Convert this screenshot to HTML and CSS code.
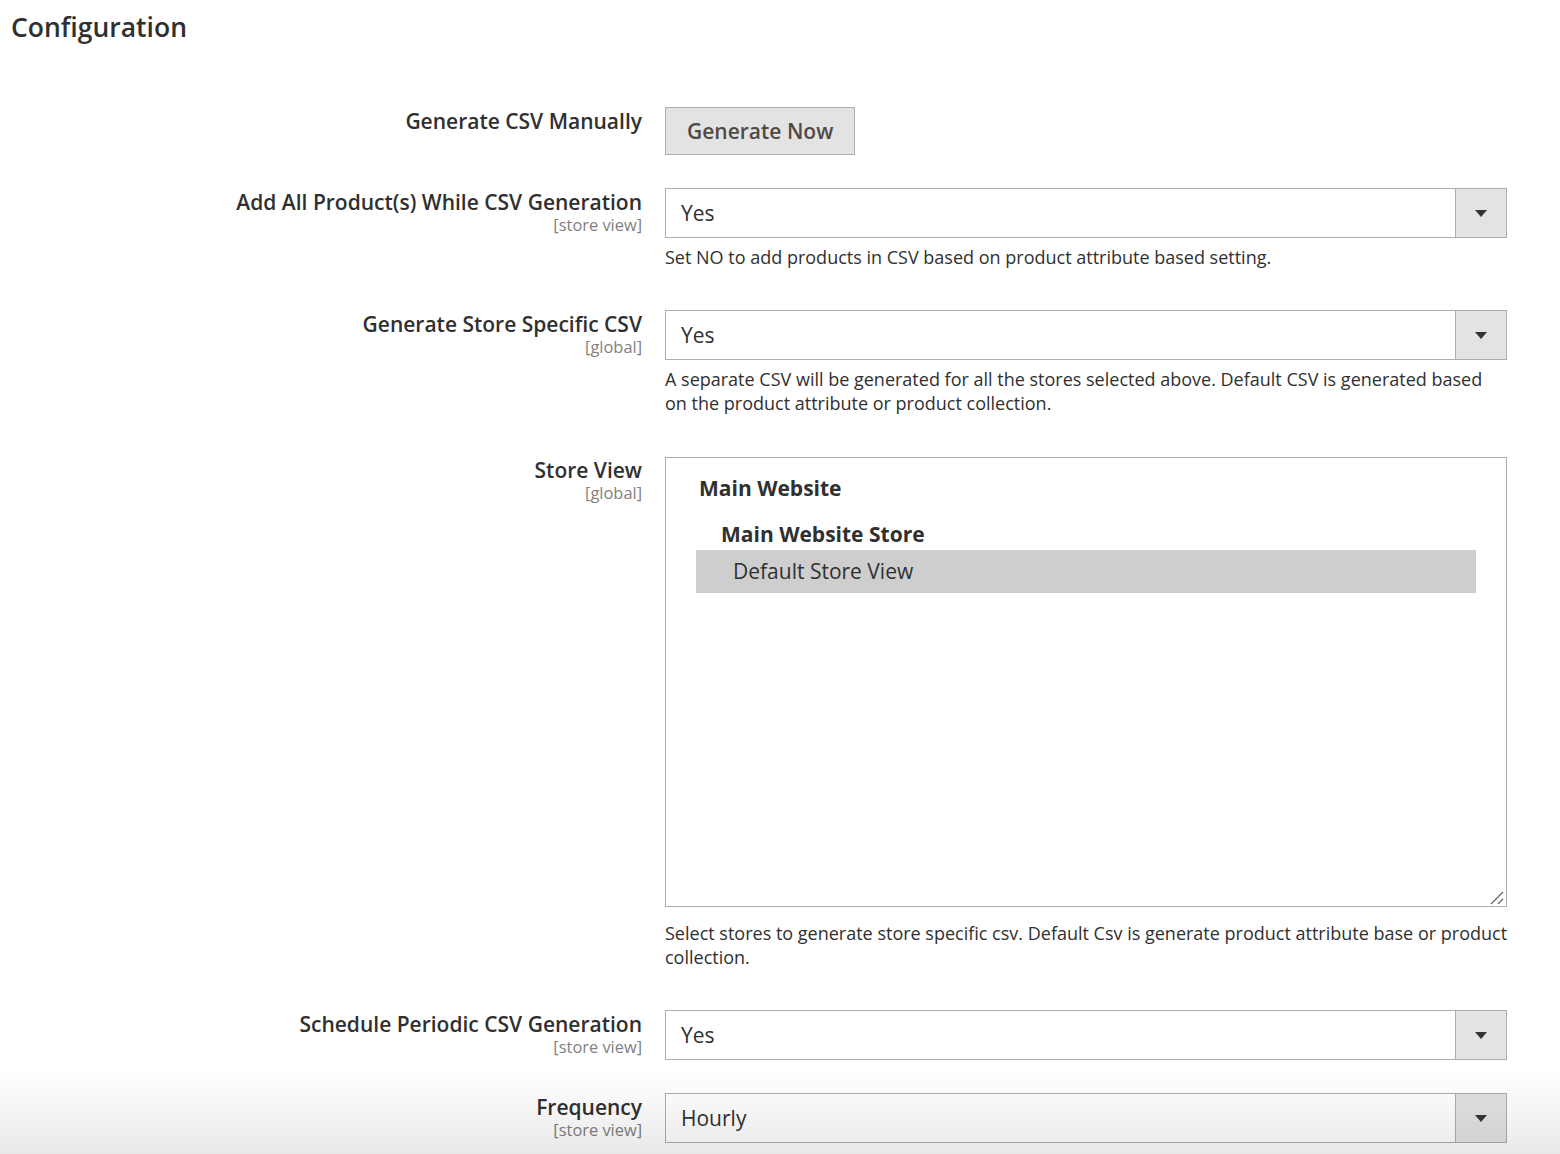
FILE: index.html
```html
<!DOCTYPE html>
<html lang="en">
<head>
  <meta charset="UTF-8">
  <meta name="viewport" content="width=device-width, initial-scale=1.0">
  <title>Configuration</title>
  <link rel="stylesheet" href="styles.css">
</head>
<body>
  <h1 class="page-title">Configuration</h1>

  <div class="config">
    <div class="row">
      <div class="label">
        <span class="name">Generate CSV Manually</span>
      </div>
      <div class="value">
        <button class="btn" type="button">Generate Now</button>
      </div>
    </div>

    <div class="row">
      <div class="label">
        <span class="name">Add All Product(s) While CSV Generation</span>
        <span class="scope">[store view]</span>
      </div>
      <div class="value">
        <div class="select"><span class="select-text">Yes</span><span class="select-arrow"></span></div>
        <p class="note">Set NO to add products in CSV based on product attribute based setting.</p>
      </div>
    </div>

    <div class="row">
      <div class="label">
        <span class="name">Generate Store Specific CSV</span>
        <span class="scope">[global]</span>
      </div>
      <div class="value">
        <div class="select"><span class="select-text">Yes</span><span class="select-arrow"></span></div>
        <p class="note">A separate CSV will be generated for all the stores selected above. Default CSV is generated based on the product attribute or product collection.</p>
      </div>
    </div>

    <div class="row">
      <div class="label">
        <span class="name">Store View</span>
        <span class="scope">[global]</span>
      </div>
      <div class="value">
        <div class="multiselect">
          <div class="ms-group">Main Website</div>
          <div class="ms-store">Main Website Store</div>
          <div class="ms-option selected">Default Store View</div>
          <svg class="resize" width="16" height="16" viewBox="0 0 16 16">
            <path d="M2 15 L14 3 M9 15 L14 10" stroke="#666" stroke-width="1.3" fill="none"/>
          </svg>
        </div>
        <p class="note note-wide">Select stores to generate store specific csv. Default Csv is generate product attribute base or product collection.</p>
      </div>
    </div>

    <div class="row">
      <div class="label">
        <span class="name">Schedule Periodic CSV Generation</span>
        <span class="scope">[store view]</span>
      </div>
      <div class="value">
        <div class="select"><span class="select-text">Yes</span><span class="select-arrow"></span></div>
      </div>
    </div>

    <div class="row">
      <div class="label">
        <span class="name">Frequency</span>
        <span class="scope">[store view]</span>
      </div>
      <div class="value">
        <div class="select"><span class="select-text">Hourly</span><span class="select-arrow"></span></div>
      </div>
    </div>
  </div>

  <div class="fade"></div>
</body>
</html>
```

FILE: styles.css
```css
body {
  margin: 0;
  font-family: 'Open Sans', 'Liberation Sans', sans-serif;
  color: #303030;
  background-color: #fff;
}
.page-title {
  font-size: 26.5px;
  font-weight: 600;
  line-height: 32px;
  margin: 11px 0 64px 11px;
  color: #303030;
}
.config {
  display: flex;
  flex-direction: column;
  gap: 33px;
}
.row {
  display: grid;
  grid-template-columns: 642px 842px;
  column-gap: 23px;
}
.label {
  display: flex;
  flex-direction: column;
  align-items: flex-end;
  text-align: right;
  padding-top: 3px;
}
.name {
  font-size: 21px;
  font-weight: 600;
  line-height: 23px;
}
.scope {
  margin-top: 1px;
  font-size: 16.4px;
  line-height: 20px;
  color: #808080;
}
.btn {
  font-family: inherit;
  font-size: 21px;
  font-weight: 600;
  color: #514943;
  background-color: #e3e3e3;
  border: 1px solid #adadad;
  height: 48px;
  padding: 0 21px;
  cursor: pointer;
}
.select {
  display: flex;
  height: 50px;
  border: 1px solid #adadad;
  box-sizing: border-box;
  background-color: #fff;
}
.select-text {
  flex: 1;
  font-size: 21px;
  line-height: 48px;
  padding-left: 15px;
}
.select-arrow {
  width: 50px;
  border-left: 1px solid #adadad;
  background-color: #e3e3e3;
  display: flex;
  align-items: center;
  justify-content: center;
}
.select-arrow::after {
  content: '';
  border-left: 6px solid transparent;
  border-right: 6px solid transparent;
  border-top: 7px solid #333;
}
.note {
  margin: 7px 0 0;
  padding-bottom: 8px;
  font-size: 18px;
  line-height: 24px;
}
.note-wide {
  margin-top: 14px;
  margin-right: -8px;
}
.multiselect {
  position: relative;
  height: 450px;
  margin-top: 1px;
  box-sizing: border-box;
  border: 1px solid #adadad;
  padding: 9px 30px 0;
  font-size: 21px;
}
.ms-group {
  font-weight: 700;
  line-height: 26px;
  padding: 8px 0 8px 3px;
}
.ms-store {
  font-weight: 700;
  line-height: 26px;
  padding: 12px 0 3px 25px;
}
.ms-option {
  line-height: 43px;
  padding-left: 37px;
}
.ms-option.selected {
  background-color: #cecece;
}
.resize {
  position: absolute;
  right: 1px;
  bottom: 1px;
}
.fade {
  position: fixed;
  left: 0;
  right: 0;
  bottom: 0;
  height: 80px;
  pointer-events: none;
  mix-blend-mode: multiply;
  background: linear-gradient(#fff, #e9e9e9);
}
```
